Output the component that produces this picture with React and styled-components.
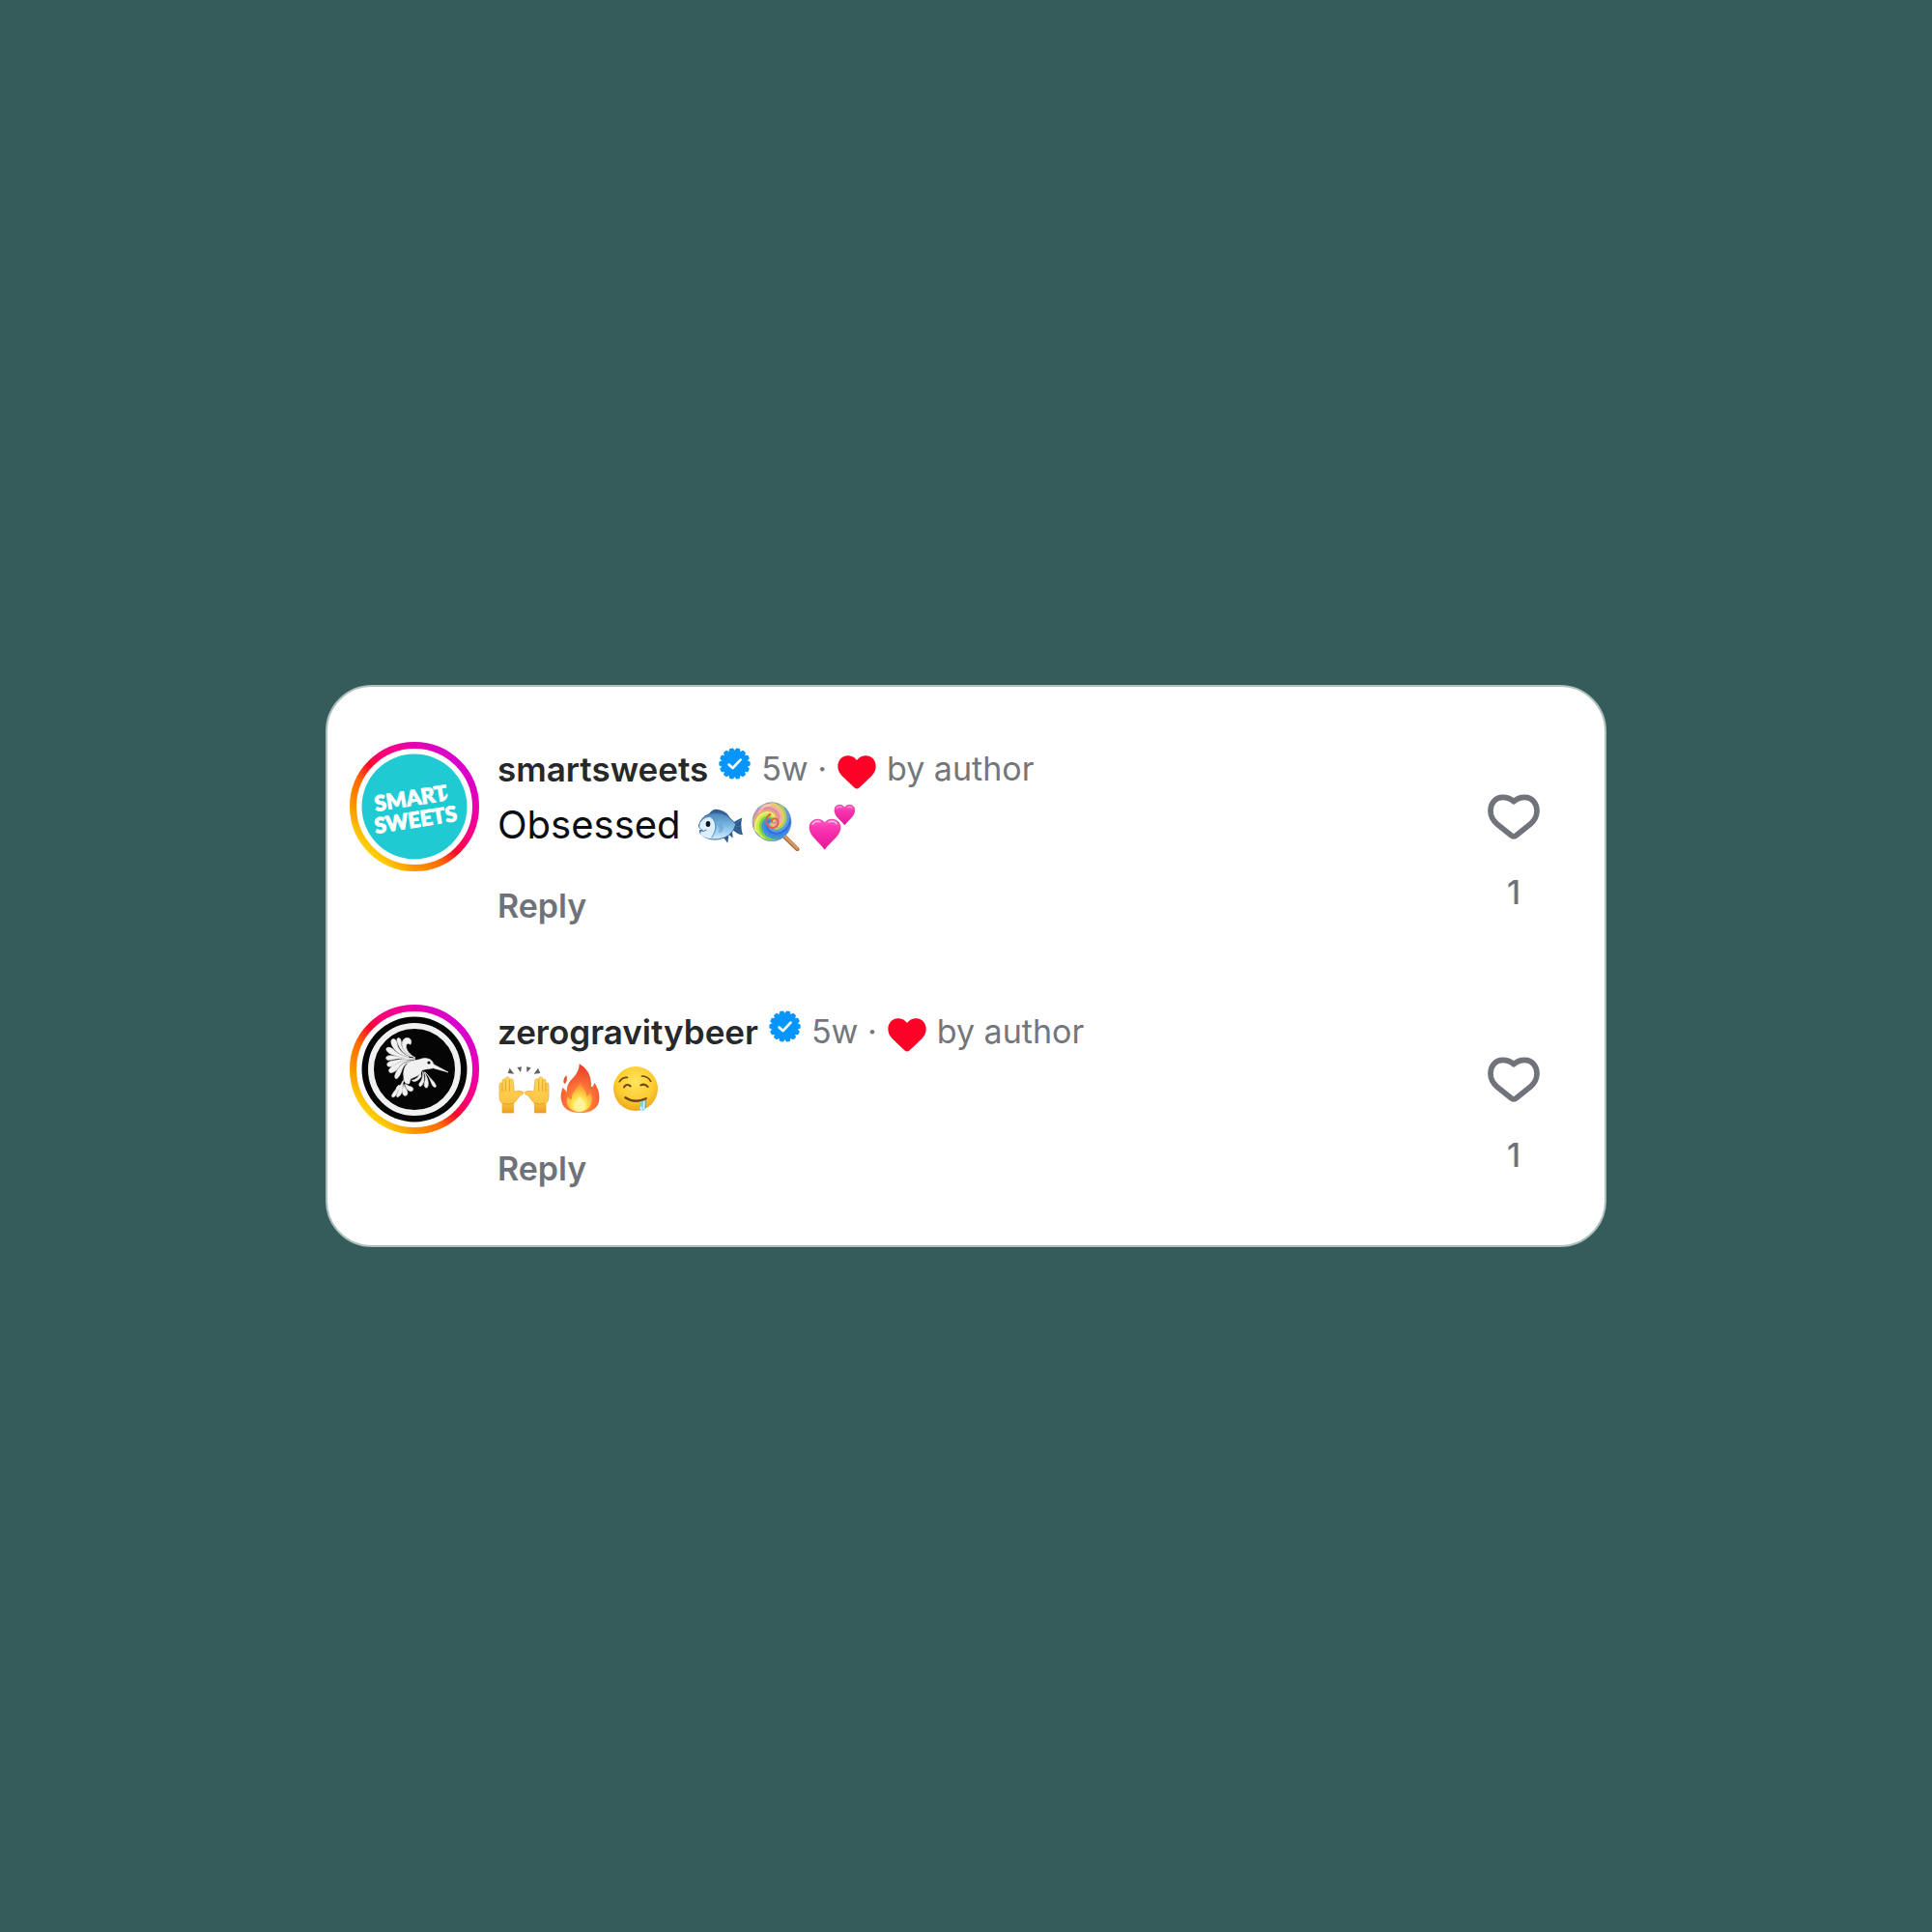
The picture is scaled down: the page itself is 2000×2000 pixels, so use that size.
import React from "react";
import styled, { createGlobalStyle } from "styled-components";

const GlobalStyle = createGlobalStyle`
  *, *::before, *::after { box-sizing: border-box; }
  body {
    margin: 0;
    background: #355c5a;
    font-family: Inter, "Liberation Sans", sans-serif;
  }
`;

const Page = styled.main`
  min-height: 100vh;
  padding: 48px 24px;
  display: flex;
  align-items: center;
  justify-content: center;
`;

const Card = styled.ul`
  width: 100%;
  max-width: 1326px;
  margin: 0;
  padding: 57px 67px 59px 23px;
  list-style: none;
  display: flex;
  flex-direction: column;
  gap: 82px;
  background: #ffffff;
  border: 2px solid #adc0bd;
  border-radius: 48px;
`;

const Comment = styled.li`
  display: flex;
  align-items: flex-start;
  gap: 19px;
`;

const AvatarLink = styled.a`
  flex: none;
  display: block;
  border-radius: 50%;
`;

const Picture = styled.svg`
  display: block;
  flex: none;
  width: ${(p) => p.$w}px;
  height: ${(p) => p.$h}px;
`;

const Body = styled.div`
  flex: 1;
  min-width: 0;
`;

const Meta = styled.div`
  display: flex;
  align-items: center;
  gap: 11px;
  min-height: 56px;
  font-size: 34px;
  line-height: 56px;
  color: #73777b;
  white-space: nowrap;
`;

const Username = styled.a`
  color: #262829;
  font-size: 35px;
  font-weight: 600;
  text-decoration: none;
`;

const BadgeSlot = styled.span`
  padding-bottom: 12px;
`;

const AuthorLike = styled.span`
  display: flex;
  align-items: center;
  gap: 11px;
`;

const HeartSlot = styled.span`
  padding-top: 6px;
`;

const Message = styled.p`
  margin: 0;
  min-height: 60px;
  display: flex;
  align-items: center;
  gap: 14px;
  font-size: 40px;
  line-height: 60px;
  color: #0c0f12;
`;

const EmojiRun = styled.span`
  display: flex;
  gap: 4px;
`;

const ReplyButton = styled.button`
  display: block;
  margin: 34px 0 0;
  padding: 0;
  border: 0;
  background: none;
  font: 600 34px/40px Inter, "Liberation Sans", sans-serif;
  color: #6f7379;
  cursor: pointer;
`;

const LikeButton = styled.button`
  flex: none;
  display: flex;
  flex-direction: column;
  align-items: center;
  gap: 34px;
  margin: 54px 0 0;
  padding: 0;
  border: 0;
  background: none;
  font: 500 34px/40px Inter, "Liberation Sans", sans-serif;
  color: #6f7379;
  cursor: pointer;
`;

function point(cx, cy, r, a) {
  return `${(cx + r * Math.cos(a)).toFixed(2)} ${(cy + r * Math.sin(a)).toFixed(2)}`;
}

function scallopPath(c, r, depth, bumps) {
  const steps = 224;
  const pts = [];
  for (let i = 0; i < steps; i++) {
    const a = (i / steps) * Math.PI * 2;
    const wave = Math.abs(Math.cos((bumps * a) / 2));
    pts.push(point(c, c, r - depth + depth * Math.min(1, wave * 1.4), a));
  }
  return `M${pts.join("L")}Z`;
}

const BADGE_PATH = scallopPath(50, 49, 8, 14);

function VerifiedBadge() {
  return (
    <Picture $w={33} $h={33} viewBox="0 0 100 100" role="img" aria-label="Verified">
      <path d={BADGE_PATH} fill="#0696fb" />
      <path d="M32 53 44 64 68 38" fill="none" stroke="#fff" strokeWidth="8" strokeLinecap="round" strokeLinejoin="round" />
    </Picture>
  );
}

function SolidHeart() {
  return (
    <Picture $w={40} $h={35} viewBox="14 20 120 105" role="img" aria-label="Liked">
      <path
        fill="#fc0226"
        d="M74 35C66 24 55 21 45 21C27 21 15 36 15 54C15 75 30 85 42 97L66 120Q74 127 82 120L106 97C120 84 133 74 133 54C133 36 121 21 103 21C93 21 82 24 74 35Z"
      />
    </Picture>
  );
}

function OutlineHeart() {
  return (
    <Picture $w={54} $h={48} viewBox="120 394 162 144" aria-hidden="true">
      <path
        fill="none"
        stroke="#70747a"
        strokeWidth="17"
        strokeLinejoin="round"
        d="M201 417C190 406 178 404 166 404C145 404 129 422 129 446C129 466 137 477 150 488L193 522Q201 530 209 522L252 488C265 477 273 466 273 446C273 422 257 404 236 404C224 404 212 406 201 417Z"
      />
    </Picture>
  );
}

function StoryRing({ id }) {
  return (
    <>
      <defs>
        <linearGradient id={id} x1="0.146" y1="0.854" x2="0.854" y2="0.146">
          <stop offset="0" stopColor="#ffcc00" />
          <stop offset="0.15" stopColor="#ff9400" />
          <stop offset="0.33" stopColor="#ff6a00" />
          <stop offset="0.48" stopColor="#f90a2c" />
          <stop offset="0.62" stopColor="#ff0078" />
          <stop offset="0.84" stopColor="#ea00a8" />
          <stop offset="1" stopColor="#d800cc" />
        </linearGradient>
      </defs>
      <circle cx="67" cy="67" r="63.5" fill="#fff" stroke={`url(#${id})`} strokeWidth="7" />
    </>
  );
}

function SmartSweetsAvatar() {
  return (
    <Picture $w={134} $h={134} viewBox="0 0 134 134" role="img" aria-label="smartsweets profile picture">
      <StoryRing id="ring-sweets" />
      <circle cx="67" cy="67" r="54.5" fill="#20cad3" />
      <g fill="#fff" stroke="#fff" strokeWidth="1" fontFamily="Lato, 'Open Sans', sans-serif" fontWeight="900">
        <text x="27" y="72" fontSize="22" transform="rotate(-9 27 72)">SMART</text>
        <text x="27" y="95" fontSize="22" transform="rotate(-9 27 95)">SWEETS</text>
      </g>
      <path d="M95 58Q99 57 101 53Q103 57 98 61Z" fill="#fff" />
    </Picture>
  );
}

function HummingbirdAvatar() {
  return (
    <Picture $w={134} $h={134} viewBox="0 0 134 134" role="img" aria-label="zerogravitybeer profile picture">
      <StoryRing id="ring-beer" />
      <circle cx="67" cy="67" r="54.5" fill="#050505" />
      <circle cx="67" cy="67" r="45" fill="none" stroke="#f1f1f1" strokeWidth="6" />
      <g transform="translate(28 26) scale(0.3333)" fill="#f1f1f1" stroke="#f1f1f1" strokeWidth="2">
        <path d="M120 87C96 80 78 62 79 42C80 29 91 23 99 26C108 29 109 40 104 46C100 40 92 42 91 50C90 64 105 79 120 87Z" />
        <path d="M108 84C86 78 73 62 68 48C64 36 60 28 66 26C74 23 77 36 76 46C79 62 92 76 108 84Z" />
        <path d="M101 85C76 80 62 70 52 56C44 45 42 32 49 29C57 26 64 37 64 49C69 64 84 77 101 85Z" />
        <path d="M99 87C78 87 58 82 43 75C30 68 27 59 32 56C40 52 52 60 57 67C68 77 83 83 99 87Z" />
        <path d="M120 90C94 88 72 87 56 91C40 95 29 96 29 88C29 80 42 78 54 82C73 88 96 87 120 90Z" />
        <path d="M119 93C96 91 77 94 62 105C50 114 36 118 33 111C29 101 44 96 58 95C76 91 99 89 119 93Z" />
        <path d="M111 97C91 95 78 103 68 117C59 130 45 137 39 131C34 123 47 113 58 109C73 97 91 92 111 97Z" />
        <path d="M103 101C91 102 83 111 77 128C72 143 63 156 58 151C53 145 60 130 67 121C77 107 89 99 103 101Z" />
        <path d="M84 147C80 120 92 98 119 95C137 93 139 88 154 89C167 90 174 97 176 107L222 132L176 119C162 122 149 121 140 126C136 142 119 146 108 151C99 157 106 167 98 168C89 168 83 159 84 147Z" />
        <path d="M83 157C76 163 79 171 69 174C62 177 60 183 63 187C71 188 82 175 83 157Z" />
        <path d="M69 172C62 175 62 184 55 191C47 200 45 208 49 209C58 211 68 194 69 172Z" />
        <path d="M79 171C69 178 69 190 64 199C60 207 62 211 67 208C78 202 82 184 79 171Z" />
        <path d="M84 170C80 184 77 197 84 203C91 208 98 201 95 192C92 182 86 179 84 170Z" />
        <path d="M88 168C90 181 96 190 107 191C116 189 114 180 107 177C98 175 94 172 88 168Z" />
        <path d="M136 131C133 142 125 155 109 157C115 165 131 158 138 145Z" />
        <path d="M143 130C145 144 140 159 132 167C130 173 133 177 138 175C147 167 150 148 143 130Z" />
        <path d="M147 132C154 144 151 155 148 167C147 177 151 182 157 179C164 170 158 147 147 132Z" />
        <path d="M149 131C162 142 166 156 171 168C174 177 182 181 184 176C185 166 164 149 149 131Z" />
      </g>
      <circle cx="82" cy="60" r="1.6" fill="#050505" />
    </Picture>
  );
}

function FishEmoji() {
  return (
    <Picture $w={54} $h={54} viewBox="12 21 162 162" role="img" aria-label="fish">
      <defs>
        <linearGradient id="fish-body" x1="0" y1="0" x2="0" y2="1">
          <stop offset="0" stopColor="#4b83b8" />
          <stop offset="0.5" stopColor="#7fbbe6" />
          <stop offset="1" stopColor="#d3ecfa" />
        </linearGradient>
      </defs>
      <path d="M57 68C62 58 74 51 83 54C100 56 118 66 123 84L110 94Z" fill="#315f91" />
      <path d="M122 98C136 94 147 83 160 80C156 93 155 111 162 133C145 132 137 120 124 115Z" fill="#2d5a8c" />
      <path d="M87 138L104 144L115 158L118 136Z" fill="#315c90" />
      <path d="M117 130L131 143L129 123Z" fill="#315c90" />
      <path d="M31 91C42 65 86 55 116 76Q129 86 140 100Q136 119 121 131C97 151 53 155 30 128L28 119L38 116L27 111C23 104 27 98 31 91Z" fill="url(#fish-body)" stroke="#3b6799" strokeWidth="3" />
      <path d="M29 96C42 77 63 72 71 86C79 104 76 127 62 144C44 142 32 134 30 128L41 119L28 111Z" fill="#dceffa" />
      <path d="M64 80C83 92 81 119 65 141" fill="none" stroke="#5a93c4" strokeWidth="3" />
      <path d="M84 100Q101 93 101 113Q98 127 85 127Q94 114 84 100Z" fill="#5b9bd0" opacity="0.5" />
      <path d="M28 119L41 121L49 117" fill="none" stroke="#436b97" strokeWidth="3" />
      <ellipse cx="54" cy="99" rx="7" ry="9" fill="#10151d" />
      <path d="M140 98L157 85M141 106L158 108M139 113L157 128" stroke="#4c7fb0" strokeWidth="2" />
    </Picture>
  );
}

const CANDY_COLORS = [
  "#2f6fdf", "#3c86ea", "#3f9ad0", "#7ed04a", "#c6ee48", "#f2ee66",
  "#eaa87c", "#e58ea6", "#f3b4a0", "#eecb68", "#a9cf5c", "#5a9ae6",
];

const CANDY_ARMS = CANDY_COLORS.map((fill, i) => {
  const n = CANDY_COLORS.length;
  const edge = (k) =>
    Array.from({ length: 25 }, (_, s) => {
      const t = s / 24;
      return point(252, 92, 60 * t, (k / n) * Math.PI * 2 + (1 - t) * 4 - 0.5);
    });
  return { fill, d: `M${edge(i).concat(edge(i + 1.08).reverse()).join("L")}Z` };
});

function LollipopEmoji() {
  return (
    <Picture $w={54} $h={54} viewBox="186 21 162 162" role="img" aria-label="lollipop">
      <path d="M290 137L331 177" stroke="#a8683b" strokeWidth="13" strokeLinecap="round" />
      <path d="M291 136L331 175" stroke="#d99a62" strokeWidth="8" strokeLinecap="round" />
      <circle cx="252" cy="92" r="61" fill="#6f95c8" />
      {CANDY_ARMS.map((arm) => (
        <path key={arm.fill} d={arm.d} fill={arm.fill} />
      ))}
      <path d="M252 92C250 82 264 78 270 88C276 102 262 115 247 109C230 101 232 77 247 69" fill="none" stroke="#e4604f" strokeWidth="6" strokeLinecap="round" />
      <path d="M212 62Q226 42 248 39" fill="none" stroke="#fff" strokeOpacity="0.4" strokeWidth="5" strokeLinecap="round" />
    </Picture>
  );
}

function TwoHeartsEmoji() {
  return (
    <Picture $w={54} $h={54} viewBox="360 21 162 162" role="img" aria-label="two hearts">
      <defs>
        <linearGradient id="pink-heart" x1="0" y1="0" x2="0" y2="1">
          <stop offset="0" stopColor="#ff62c5" />
          <stop offset="0.3" stopColor="#fb35b0" />
          <stop offset="1" stopColor="#e6149b" />
        </linearGradient>
      </defs>
      <g fill="url(#pink-heart)" stroke="#d51a93" strokeWidth="2">
        <path d="M416 96C406 78 370 81 369 109C369 137 397 151 416 178C435 151 465 137 465 109C464 81 426 78 416 96Z" />
        <path d="M478 49C472 36 447 36 447 56C447 75 466 85 478 102C490 85 509 75 509 56C509 36 484 36 478 49Z" />
      </g>
      <g fill="none" stroke="#ffb2e2" strokeLinecap="round" strokeWidth="5">
        <path d="M379 99Q388 87 401 92M429 93Q445 86 453 98" />
        <path d="M454 49Q460 43 468 46M488 47Q496 42 501 48" strokeWidth="3" />
      </g>
    </Picture>
  );
}

function Hand() {
  return (
    <>
      <path
        d="M48 186V157C38 148 39 139 39 128V99C39 90 48 91 48 98V88C48 79 57 79 58 87V80C59 72 69 72 70 80V86C72 78 82 79 82 88L85 121C94 116 106 118 113 122C115 126 110 130 103 132C97 139 91 151 83 156V186Z"
        fill="url(#hand-skin)"
        stroke="#e8a426"
        strokeWidth="2"
      />
      <path d="M48 98V120M58 88V118M70 86V119M52 157Q68 164 82 156" fill="none" stroke="#dc9a20" strokeWidth="2.5" strokeLinecap="round" />
    </>
  );
}

function RaisedHandsEmoji() {
  return (
    <Picture $w={54} $h={54} viewBox="33 27 162 162" role="img" aria-label="raising hands">
      <defs>
        <linearGradient id="hand-skin" x1="0" y1="0" x2="0" y2="1">
          <stop offset="0" stopColor="#ffd75a" />
          <stop offset="0.7" stopColor="#fdc544" />
          <stop offset="1" stopColor="#e99d1c" />
        </linearGradient>
      </defs>
      <Hand />
      <g transform="translate(231 0) scale(-1 1)">
        <Hand />
      </g>
      <path d="M71 47L85 65L65 63ZM94 45L108 43L105 60ZM123 43L137 46L125 61ZM159 47L166 63L146 65Z" fill="#5e6266" />
    </Picture>
  );
}

function FireEmoji() {
  return (
    <Picture $w={54} $h={54} viewBox="207 27 162 162" role="img" aria-label="fire">
      <defs>
        <radialGradient id="flame-outer" cx="0.5" cy="0.8" r="0.75">
          <stop offset="0" stopColor="#ffb43a" />
          <stop offset="0.5" stopColor="#fb7138" />
          <stop offset="1" stopColor="#ec3f2b" />
        </radialGradient>
        <radialGradient id="flame-inner" cx="0.5" cy="0.78" r="0.7">
          <stop offset="0" stopColor="#fffbb4" />
          <stop offset="0.45" stopColor="#ffdf49" />
          <stop offset="1" stopColor="#fb8b35" />
        </radialGradient>
      </defs>
      <path d="M287 34C308 46 326 67 324 105C330 106 333 99 334 92C345 109 354 132 347 155C340 176 319 186 290 186C257 186 237 174 232 150C227 135 232 120 235 108C240 111 244 117 249 122C246 105 255 89 269 76C280 65 287 50 287 34Z" fill="url(#flame-outer)" />
      <path d="M248 70C239 76 235 89 241 96C250 91 249 82 248 70Z" fill="#ee5038" />
      <path d="M290 90C293 107 309 115 310 135C317 134 319 126 320 121C334 143 327 178 289 184C253 181 242 157 251 136C256 143 260 145 264 145C260 124 284 110 290 90Z" fill="url(#flame-inner)" />
      <path d="M288 135C299 148 312 156 307 171C299 185 274 184 269 170C266 157 284 149 288 135Z" fill="#fff5a0" opacity="0.8" />
    </Picture>
  );
}

function DroolingEmoji() {
  return (
    <Picture $w={54} $h={54} viewBox="381 27 162 162" role="img" aria-label="drooling face">
      <defs>
        <radialGradient id="face-fill" cx="0.5" cy="0.35" r="0.65">
          <stop offset="0" stopColor="#ffe55e" />
          <stop offset="0.65" stopColor="#fccb30" />
          <stop offset="1" stopColor="#efa51b" />
        </radialGradient>
      </defs>
      <circle cx="462" cy="111" r="69" fill="url(#face-fill)" />
      <g fill="none" stroke="#714410" strokeLinecap="round">
        <path d="M412 89Q420 75 436 76M481 72Q500 72 509 88" strokeWidth="5" />
        <path d="M426 106Q434 94 446 103M478 100Q490 94 500 105" strokeWidth="6" />
        <path d="M430 139Q458 158 494 142" strokeWidth="7" />
      </g>
      <path d="M476 150Q487 151 493 145L492 174Q486 183 475 177Q469 172 476 165Z" fill="#7dcff1" />
      <path d="M489 151L487 172M479 168Q477 173 482 175" fill="none" stroke="#e6faff" strokeWidth="4" strokeLinecap="round" />
      <path d="M493 147V170" stroke="#368fb9" strokeWidth="2" />
    </Picture>
  );
}

const COMMENTS = [
  {
    user: "smartsweets",
    age: "5w",
    text: "Obsessed",
    likes: 1,
    Avatar: SmartSweetsAvatar,
    emojis: [FishEmoji, LollipopEmoji, TwoHeartsEmoji],
  },
  {
    user: "zerogravitybeer",
    age: "5w",
    text: "",
    likes: 1,
    Avatar: HummingbirdAvatar,
    emojis: [RaisedHandsEmoji, FireEmoji, DroolingEmoji],
  },
];

export default function App() {
  return (
    <>
      <GlobalStyle />
      <Page>
        <Card>
          {COMMENTS.map(({ user, age, text, likes, Avatar, emojis }) => (
            <Comment key={user}>
              <AvatarLink href={`#${user}`}>
                <Avatar />
              </AvatarLink>
              <Body>
                <Meta>
                  <Username href={`#${user}`}>{user}</Username>
                  <BadgeSlot>
                    <VerifiedBadge />
                  </BadgeSlot>
                  <span>{age} ·</span>
                  <AuthorLike>
                    <HeartSlot>
                      <SolidHeart />
                    </HeartSlot>
                    by author
                  </AuthorLike>
                </Meta>
                <Message>
                  {text && <span>{text}</span>}
                  <EmojiRun>
                    {emojis.map((Emoji) => (
                      <Emoji key={Emoji.name} />
                    ))}
                  </EmojiRun>
                </Message>
                <ReplyButton type="button">Reply</ReplyButton>
              </Body>
              <LikeButton type="button" aria-label={`Like, ${likes}`}>
                <OutlineHeart />
                <span>{likes}</span>
              </LikeButton>
            </Comment>
          ))}
        </Card>
      </Page>
    </>
  );
}
